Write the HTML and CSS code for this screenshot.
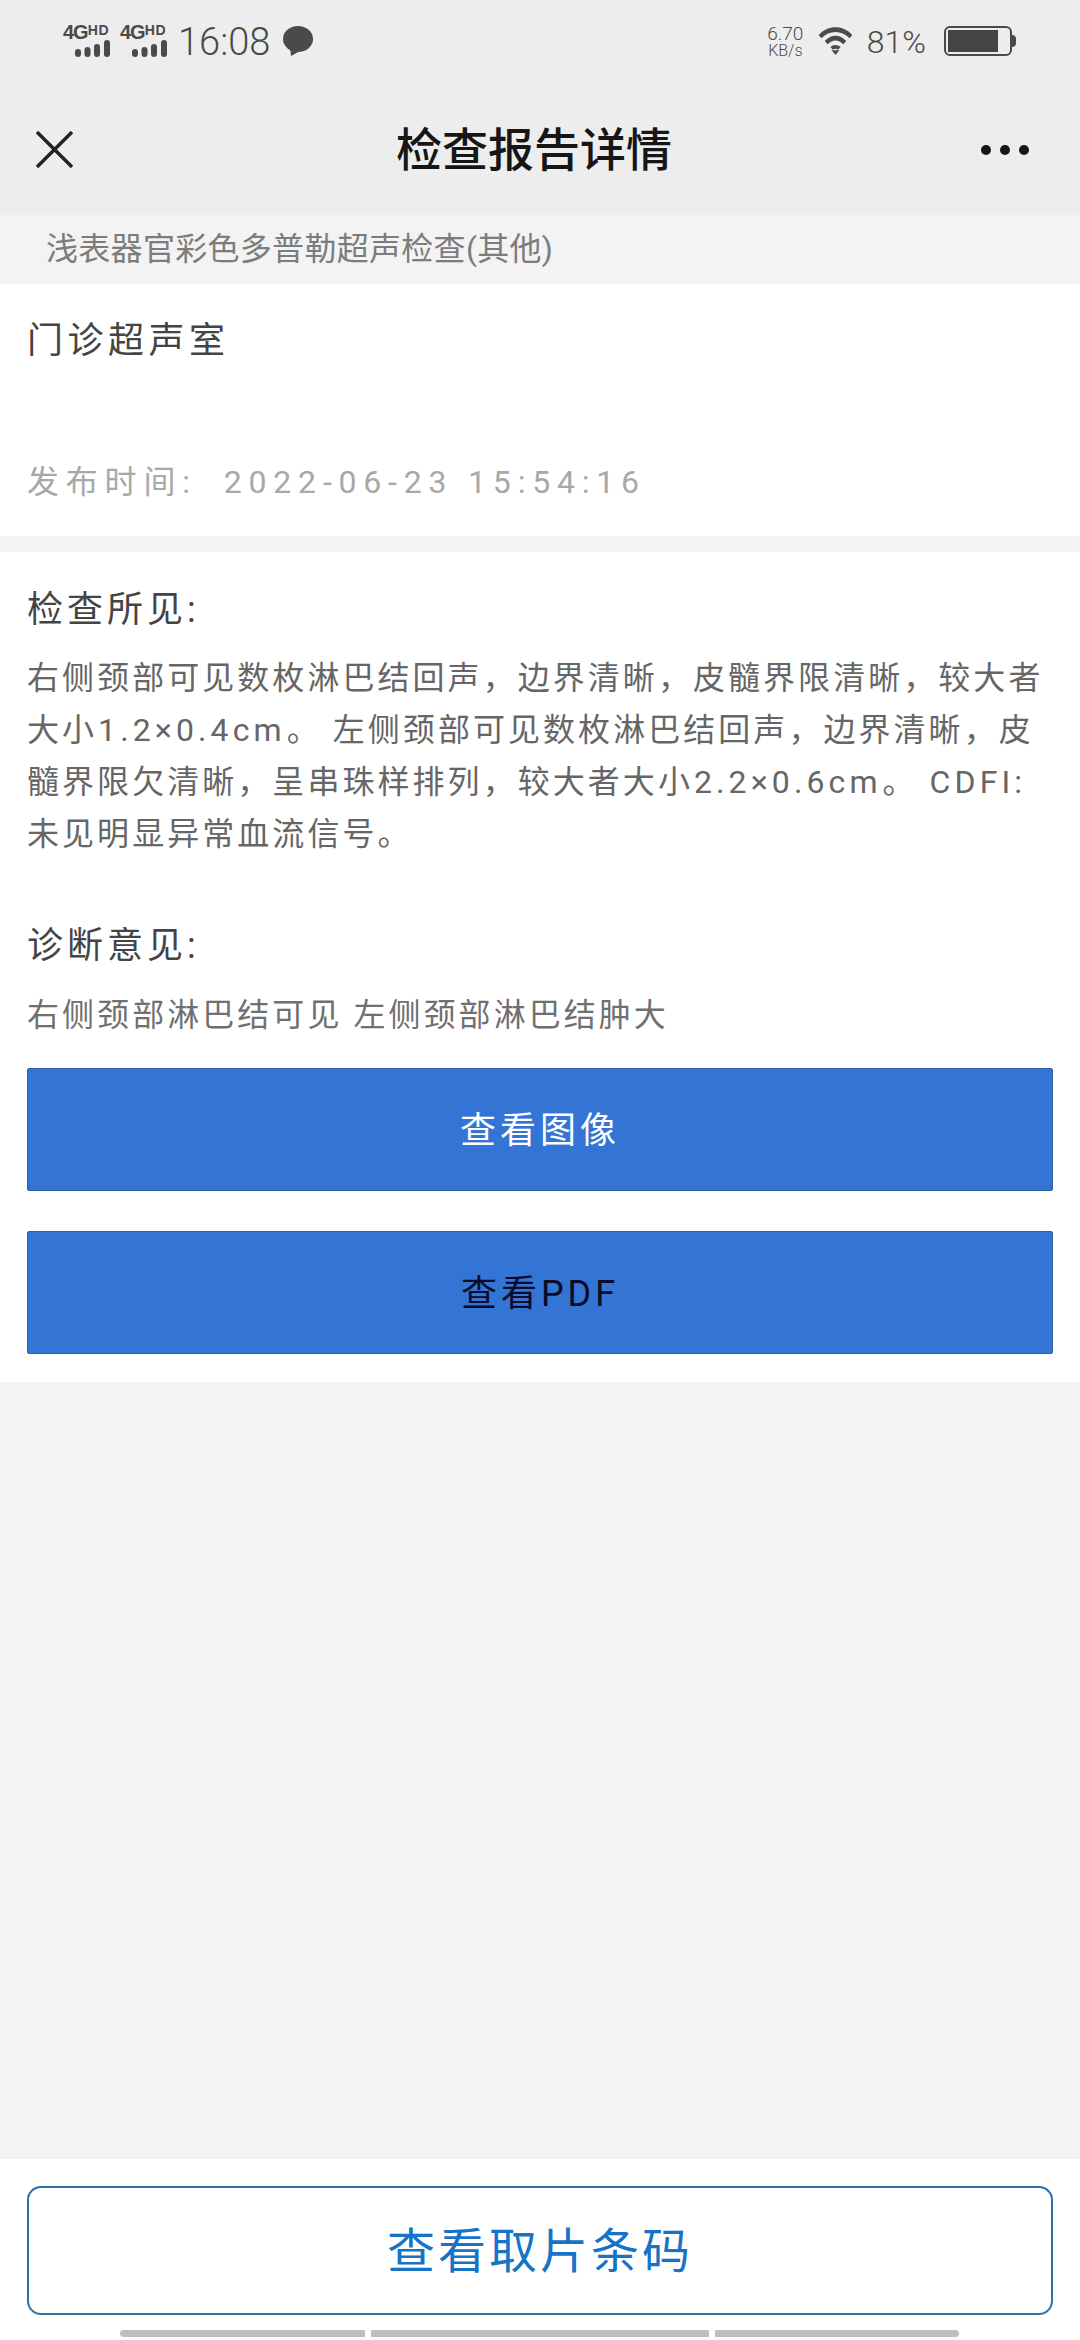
FILE: index.html
```html
<!DOCTYPE html>
<html lang="zh-CN">
<head>
<meta charset="utf-8">
<title>检查报告详情</title>
<link rel="stylesheet" href="styles.css">
</head>
<body>
<div class="app">
  <header class="top">
    <div class="status">
      <div class="status-left">
        <div class="net">
          <div class="net-label"><span class="net-4g">4G</span><span class="net-hd">HD</span></div>
          <svg class="bars" viewBox="0 0 35 17"><rect x="0" y="9" width="6" height="8" rx="3"/><rect x="9.500" y="7" width="6" height="10" rx="3"/><rect x="19" y="4" width="6" height="13" rx="3"/><rect x="29" y="0" width="6" height="17" rx="3"/></svg>
        </div>
        <div class="net">
          <div class="net-label"><span class="net-4g">4G</span><span class="net-hd">HD</span></div>
          <svg class="bars" viewBox="0 0 35 17"><rect x="0" y="9" width="6" height="8" rx="3"/><rect x="9.500" y="7" width="6" height="10" rx="3"/><rect x="19" y="4" width="6" height="13" rx="3"/><rect x="29" y="0" width="6" height="17" rx="3"/></svg>
        </div>
        <span class="clock">16:08</span>
        <svg class="msg" viewBox="0 0 30 30"><ellipse cx="15" cy="13" rx="15" ry="13"/><path d="M7 21 L8 30 L17 25 Z"/></svg>
      </div>
      <div class="status-right">
        <div class="speed"><span class="speed-num">6.70</span><span class="speed-unit">KB/s</span></div>
        <svg class="wifi" viewBox="0 0 36 30"><path d="M0 8.500C10-2.500 26-2.500 36 8.500L33 12C24.500 3 11.500 3 3 12Z"/><path d="M6.500 15C13.500 7.500 22.500 7.500 29.500 15L26.500 18.500C21 13 15 13 9.500 18.500Z"/><path d="M12.500 21.500C15.500 18.500 20.500 18.500 23.500 21.500L20.800 24.500C19 23 17 23 15.200 24.500Z"/><path d="M13.800 25H22.200L18 30Z"/></svg>
        <span class="batt-pct">81%</span>
        <div class="battery"><div class="battery-body"><div class="battery-fill"></div></div><div class="battery-cap"></div></div>
      </div>
    </div>
    <nav class="nav">
      <svg class="close" viewBox="0 0 38 38"><path d="M1 1L37 37M37 1L1 37"/></svg>
      <h1 class="nav-title">检查报告详情</h1>
      <div class="dots"><i></i><i></i><i></i></div>
    </nav>
  </header>

  <div class="subtitle">浅表器官彩色多普勒超声检查(其他)</div>

  <section class="card meta">
    <div class="dept">门诊超声室</div>
    <div class="time"><span class="time-label">发布时间:</span><span>2022-06-23 15:54:16</span></div>
  </section>

  <section class="card report">
    <h2 class="head">检查所见:</h2>
    <p class="para">右侧颈部可见数枚淋巴结回声，边界清晰，皮髓界限清晰，较大者大小<span class="latin">1.2×0.4cm</span>。 左侧颈部可见数枚淋巴结回声，边界清晰，皮髓界限欠清晰，呈串珠样排列，较大者大小<span class="latin">2.2×0.6cm</span>。 <span class="latin">CDFI:</span> 未见明显异常血流信号。</p>
    <h2 class="head head-diag">诊断意见:</h2>
    <p class="para para-diag">右侧颈部淋巴结可见 左侧颈部淋巴结肿大</p>
    <div class="btn btn-white">查看图像</div>
    <div class="btn btn-dark">查看PDF</div>
  </section>

  <div class="spacer"></div>

  <footer class="footer">
    <div class="barcode">查看取片条码</div>
    <div class="scroll"><i class="s1"></i><i class="s2"></i><i class="s3"></i></div>
  </footer>
</div>
</body>
</html>
```
FILE: styles.css
```css
* { box-sizing: border-box; }
html, body { margin: 0; padding: 0; }
body { width: 1080px; height: 2340px; background: #f3f3f3; font-family: Roboto, "Noto Sans CJK SC", sans-serif; overflow: hidden; }
.app { width: 1080px; height: 2340px; display: flex; flex-direction: column; }
.top { height: 215px; background: #ededed; flex: none; }
.status { height: 80px; padding: 24px 64px 0 63px; display: flex; justify-content: space-between; align-items: flex-start; color: #4a4a4a; }
.status-left { display: flex; align-items: center; height: 34px; }
.status-right { display: flex; align-items: center; height: 34px; }
.net { width: 47px; margin-right: 10px; display: flex; flex-direction: column; align-items: flex-end; }
.net-label { height: 15px; width: 47px; display: flex; align-items: flex-start; font-family: "Liberation Sans", sans-serif; font-weight: 700; line-height: 15px; }
.net-4g { font-size: 20px; letter-spacing: -1px; }
.net-hd { font-size: 14px; line-height: 10px; letter-spacing: 0.6px; }
.bars { width: 35px; height: 17px; fill: #4a4a4a; display: block; }
.clock { font-size: 38px; font-weight: 300; line-height: 34px; margin-left: 1px; position: relative; top: 1px; }
.msg { width: 30px; height: 30px; fill: #4a4a4a; margin-left: 13px; }
.speed { display: flex; flex-direction: column; align-items: center; width: 37px; font-weight: 300; margin-right: 14px; }
.speed-num { font-size: 19px; line-height: 18px; }
.speed-unit { font-size: 16px; line-height: 15px; }
.wifi { width: 35px; height: 28px; fill: #4a4a4a; margin-right: 14px; }
.batt-pct { font-size: 32px; font-weight: 300; margin-right: 18px; line-height: 34px; position: relative; top: 1px; }
.battery { display: flex; align-items: center; }
.battery-body { width: 68px; height: 30px; border: 2.500px solid #4a4a4a; border-radius: 6px; padding: 2px; display: flex; }
.battery-fill { width: 50px; background: #444; }
.battery-cap { width: 4px; height: 12px; background: #4a4a4a; border-radius: 0 4px 4px 0; }
.nav { height: 135px; padding: 4px 51px 0 36px; display: flex; align-items: center; justify-content: space-between; position: relative; }
.close { width: 37px; height: 37px; fill: none; stroke: #222; stroke-width: 3.500px; }
.nav-title { margin: 0; font-size: 46px; font-weight: 500; line-height: 60px; color: #161616; position: absolute; left: 0; right: 0; top: 40px; text-align: center; transform: translateX(-6px); }
.dots { display: flex; gap: 9px; }
.dots i { width: 10px; height: 10px; border-radius: 50%; background: #161616; display: block; }
.subtitle { height: 69px; flex: none; padding-left: 46px; font-size: 32px; letter-spacing: 0.300px; line-height: 69px; color: #7c7c7c; }
.card { background: #fff; flex: none; }
.meta { height: 252px; padding: 0 27px; margin-bottom: 16px; color: #444; }
.dept { font-size: 36px; line-height: 50px; padding-top: 32px; height: 175px; letter-spacing: 4.500px; }
.time { font-size: 32px; line-height: 46px; color: #a8a8a8; letter-spacing: 6.800px; display: flex; gap: 27px; }
.report { padding: 33px 27px 0; height: 830px; }
.head { margin: 0; font-size: 36px; font-weight: 400; line-height: 50px; color: #444; letter-spacing: 4px; }
.head-diag { margin-top: 61px; }
.para { margin: 0; font-size: 32px; line-height: 52px; color: #666; letter-spacing: 3.050px; }
.latin { letter-spacing: 4.100px; margin: 0 1px; }
.report > .para { margin-top: 17px; }
.report > .para-diag { margin-top: 18px; color: #707070; }
.btn { height: 123px; margin-top: 40px; padding-bottom: 6px; background: #3474d4; border: 1px solid #2e629f; border-radius: 2px; display: flex; align-items: center; justify-content: center; font-size: 36px; letter-spacing: 4px; }
.para-diag + .btn { margin-top: 27px; }
.btn-white { color: #fff; }
.btn-dark { color: #0b0b2a; }
.spacer { flex: 1; }
.footer { flex: none; height: 181px; background: #fff; padding: 27px 27px 0; position: relative; }
.barcode { height: 129px; padding-bottom: 8px; border: 2.500px solid #2a72ad; border-bottom-color: #2c7597; border-radius: 14px; display: flex; align-items: center; justify-content: center; color: #1673c6; font-size: 48px; letter-spacing: 3px; }
.scroll { position: absolute; left: 120px; right: 120px; bottom: 3px; height: 7px; display: flex; gap: 6px; }
.scroll i { display: block; height: 7px; background: #bebebe; }
.s1 { width: 245px; border-radius: 4px 0 0 4px; }
.s2 { width: 338px; }
.s3 { width: 244px; border-radius: 0 4px 4px 0; }
```
